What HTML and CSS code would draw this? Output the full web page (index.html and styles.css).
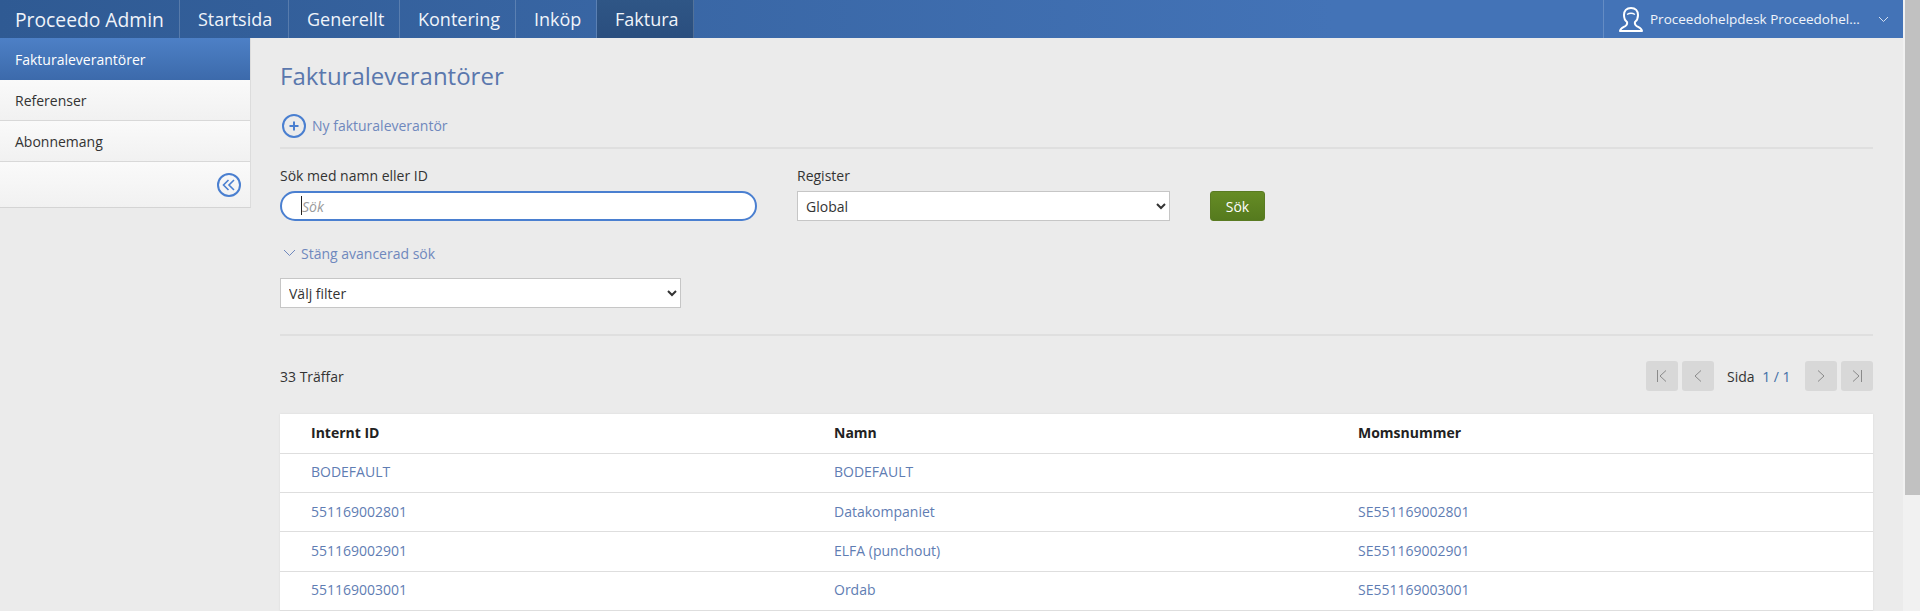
FILE: index.html
```html
<!DOCTYPE html>
<html lang="sv">
<head>
<meta charset="utf-8">
<title>Fakturaleverantörer</title>
<link rel="stylesheet" href="styles.css">
</head>
<body>
<div class="page">
<header class="topbar">
  <nav class="mainnav">
    <a class="brand">Proceedo Admin</a>
    <a class="navitem nav-start">Startsida</a>
    <a class="navitem nav-gen">Generellt</a>
    <a class="navitem nav-kont">Kontering</a>
    <a class="navitem nav-ink">Inköp</a>
    <a class="navitem nav-fakt active">Faktura</a>
  </nav>
  <div class="usermenu">
    <svg class="usericon" width="24" height="25" viewBox="0 0 24 25" fill="none" stroke="#fff" stroke-width="2" stroke-linejoin="round"><path d="M12 1C7.500 1 5 4 5 8c0 3 1 5.500 3 7 .5 2 0 3-1.500 4C4 20.500 1.500 21 1 24h22c-.5-3-3-3.500-5.500-5-1.500-1-2-2-1.500-4 2-1.500 3-4 3-7 0-4-2.500-7-7-7z"/><path d="M8 7.500c2.500-1.500 5.500-1.500 8 0" stroke-width="1.400"/></svg>
    <span class="username">Proceedohelpdesk Proceedohel...</span>
    <svg class="userchev" width="11" height="7" viewBox="0 0 11 7" fill="none" stroke="#d5e0f0" stroke-width="1"><path d="M1 1l4.500 4.500L10 1"/></svg>
  </div>
</header>
<div class="layout">
  <aside class="sidebar">
    <a class="sideitem selected">Fakturaleverantörer</a>
    <a class="sideitem">Referenser</a>
    <a class="sideitem">Abonnemang</a>
    <div class="sidefoot">
      <svg width="24" height="24" viewBox="0 0 24 24" fill="none" stroke="#4a7fd0"><circle cx="12" cy="12" r="11" stroke-width="2"/><path d="M11.500 7l-5 5 5 5M17 7l-5 5 5 5" stroke-width="1.600"/></svg>
    </div>
  </aside>
  <main class="content">
    <h1 class="title">Fakturaleverantörer</h1>
    <div class="newrow">
      <svg width="24" height="24" viewBox="0 0 24 24" fill="none" stroke="#4a7fd0"><circle cx="12" cy="12" r="11" stroke-width="2"/><path d="M12 7.500v9M7.500 12h9" stroke-width="2"/></svg>
      <a class="link newlink">Ny fakturaleverantör</a>
    </div>
    <form class="searchform">
      <div class="field field-search">
        <label class="label" for="q">Sök med namn eller ID</label>
        <div class="searchwrap">
          <input class="searchinput" id="q" placeholder="Sök">
          <span class="caret"></span>
        </div>
      </div>
      <div class="field field-reg">
        <label class="label" for="r">Register</label>
        <select class="select" id="r"><option>Global</option></select>
      </div>
      <button class="btn" type="button">Sök</button>
    </form>
    <div class="advtoggle">
      <svg width="13" height="8" viewBox="0 0 13 8" fill="none" stroke="#6f88bd" stroke-width="1"><path d="M1 1l5.500 5.500L12 1"/></svg>
      <a class="link">Stäng avancerad sök</a>
    </div>
    <select class="select filter"><option>Välj filter</option></select>
    <div class="resultbar">
      <span class="hits">33 Träffar</span>
      <div class="pager">
        <span class="pgbtn"><svg width="14" height="14" viewBox="0 0 14 14" fill="none" stroke="#8a8a8a"><path d="M2.500 1v12M11 1.500L5 7l6 5.500"/></svg></span>
        <span class="pgbtn"><svg width="14" height="14" viewBox="0 0 14 14" fill="none" stroke="#8a8a8a"><path d="M10 1.500L4 7l6 5.500"/></svg></span>
        <span class="pgtext">Sida <span class="pgnum">1 / 1</span></span>
        <span class="pgbtn"><svg width="14" height="14" viewBox="0 0 14 14" fill="none" stroke="#8a8a8a"><path d="M4 1.500L10 7l-6 5.500"/></svg></span>
        <span class="pgbtn"><svg width="14" height="14" viewBox="0 0 14 14" fill="none" stroke="#8a8a8a"><path d="M3 1.500L9 7l-6 5.500M11.500 1v12"/></svg></span>
      </div>
    </div>
    <table class="results">
      <thead><tr><th class="col1">Internt ID</th><th class="col2">Namn</th><th>Momsnummer</th></tr></thead>
      <tbody>
        <tr><td>BODEFAULT</td><td>BODEFAULT</td><td></td></tr>
        <tr><td>551169002801</td><td>Datakompaniet</td><td>SE551169002801</td></tr>
        <tr><td>551169002901</td><td>ELFA (punchout)</td><td>SE551169002901</td></tr>
        <tr><td>551169003001</td><td>Ordab</td><td>SE551169003001</td></tr>
      </tbody>
    </table>
  </main>
</div>
</div>
<div class="scrollbar"><div class="thumb"></div></div>
</body>
</html>
```
FILE: styles.css
```css
* { box-sizing: border-box; }
html { background: #ebebeb; }
body {
  margin: 0;
  height: 611px;
  overflow: hidden;
  display: flex;
  background: #ebebeb;
  font-family: "Open Sans", sans-serif;
  font-size: 14px;
  color: #333;
}
.page { flex: 1; min-width: 0; height: 611px; overflow: hidden; }
.scrollbar {
  flex: none;
  width: 17px;
  height: 611px;
  background: #f1f1f1;
  padding-left: 2px;
}
.thumb { height: 495px; background: #c1c1c1; }
.topbar {
  height: 38px;
  display: flex;
  justify-content: space-between;
  background: linear-gradient(90deg, #2f5a93 0%, #4373b7 70%, #4373b7 100%);
  color: #fff;
}
.mainnav { display: flex; }
.brand, .navitem {
  display: flex;
  align-items: center;
  height: 38px;
  border-right: 1px solid rgba(255,255,255,.18);
  color: #f0f4fa;
}
.brand { width: 180px; padding-left: 15px; font-size: 19.300px; }
.navitem { font-size: 18px; padding-left: 18px; }
.nav-start { width: 109px; }
.nav-gen { width: 111px; }
.nav-kont { width: 116px; }
.nav-ink { width: 81px; }
.nav-fakt { width: 97px; }
.navitem.active { background: linear-gradient(#2f5686, #2a4e7e); }
.usermenu {
  width: 300px;
  display: flex;
  align-items: center;
  border-left: 1px solid rgba(255,255,255,.18);
  padding-left: 15px;
  color: #f0f4fa;
  font-size: 13.500px;
}
.username { margin-left: 7px; white-space: nowrap; }
.userchev { margin-left: 18px; }
.layout { display: flex; align-items: flex-start; }
.sidebar {
  width: 251px;
  flex: none;
  border-right: 1px solid #dcdcdc;
  border-bottom: 1px solid #d4d4d4;
}
.sideitem {
  display: flex;
  align-items: center;
  height: 41px;
  padding-left: 15px;
  font-size: 14px;
  background: linear-gradient(#fafafa, #f1f1f1);
  border-bottom: 1px solid #d8d8d8;
  color: #333;
}
.sideitem.selected {
  height: 42px;
  color: #fff;
  background: linear-gradient(#4d80c6, #3c6aab);
  border-bottom: 0;
}
.sidefoot {
  height: 45px;
  display: flex;
  justify-content: flex-end;
  align-items: center;
  padding-right: 9px;
  background: linear-gradient(#fafafa, #f1f1f1);
}
.content { flex: 1; padding: 0 30px 0 29px; }
.title {
  margin: 22px 0 0;
  font-size: 24px;
  font-weight: 400;
  line-height: 32px;
  color: #5a77ad;
}
.newrow {
  display: flex;
  align-items: center;
  gap: 6px;
  margin-top: 16px;
  height: 41px;
  padding-left: 2px;
  padding-bottom: 3px;
  border-bottom: 2px solid #dfdfdf;
}
.link { color: #6f88bd; font-size: 14px; }
.newlink { padding-bottom: 2px; }
.searchform { display: flex; align-items: flex-end; margin-top: 17px; }
.field { display: flex; flex-direction: column; }
.field-search { width: 517px; }
.field-reg { width: 413px; }
.label { font-size: 14px; line-height: 20px; margin-bottom: 5px; color: #333; }
.searchwrap { position: relative; width: 477px; }
.searchinput {
  display: block;
  width: 100%;
  height: 30px;
  border: 2px solid #4a7fd0;
  border-radius: 15px;
  padding: 0 20px;
  font: italic 14px "Open Sans", sans-serif;
  outline: none;
  background: #fff;
}
.searchinput::placeholder { color: #9a9a9a; }
.caret {
  position: absolute;
  left: 21px;
  top: 5px;
  width: 1px;
  height: 19px;
  background: #222;
}
.select {
  height: 30px;
  width: 373px;
  border: 1px solid #c6c6c6;
  background: #fff;
  padding-left: 4px;
  font: 14px "Open Sans", sans-serif;
  color: #333;
  border-radius: 0;
}
.btn {
  width: 55px;
  height: 30px;
  border: 1px solid #5a7b22;
  border-radius: 3px;
  background: linear-gradient(#668c25, #557a1e);
  color: #fff;
  font: 14px "Open Sans", sans-serif;
  padding: 0;
}
.advtoggle {
  display: flex;
  align-items: center;
  gap: 5px;
  margin-top: 22px;
  padding-left: 3px;
  height: 20px;
}
.filter { display: block; width: 401px; margin-top: 15px; }
.resultbar {
  display: flex;
  justify-content: space-between;
  align-items: center;
  margin-top: 26px;
  padding-top: 25px;
  border-top: 2px solid #dfdfdf;
}
.pager { display: flex; align-items: center; gap: 4px; }
.pgbtn {
  width: 32px;
  height: 30px;
  background: #d8d8d8;
  border-radius: 3px;
  display: flex;
  align-items: center;
  justify-content: center;
}
.pgtext { width: 83px; padding-left: 9px; white-space: nowrap; }
.pgnum { color: #3f6ea6; margin-left: 4px; }
.results {
  width: 100%;
  margin-top: 23px;
  margin-bottom: 40px;
  border-collapse: collapse;
  table-layout: fixed;
  background: #fff;
  box-shadow: 0 0 2px rgba(0,0,0,.08), 0 40px 0 #fff;
}
.results th, .results td {
  height: 39.300px;
  padding: 0 0 0 31px;
  text-align: left;
  border-bottom: 1px solid #dedede;
}
.results th { color: #222; font-weight: 700; font-size: 14px; padding-bottom: 2px; }
.results td { color: #5f7db3; font-size: 14px; padding-bottom: 2px; }
.col1 { width: 523px; }
.col2 { width: 524px; }
```
